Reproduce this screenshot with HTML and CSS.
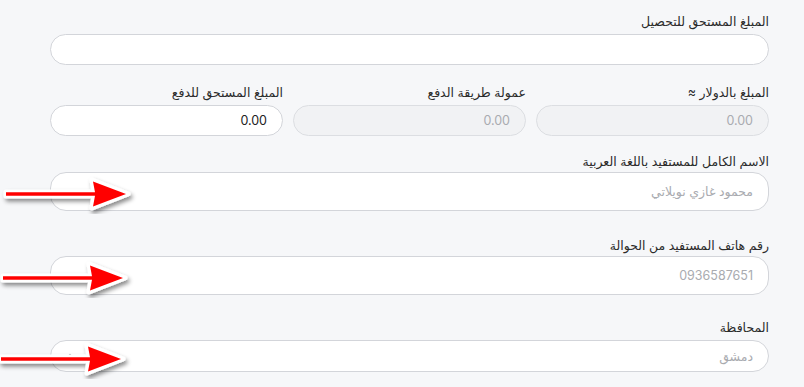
FILE: index.html
```html
<!DOCTYPE html>
<html lang="ar">
<head>
    <meta charset="UTF-8">
    <title>Transfer form</title>
    <link rel="stylesheet" href="styles.css">
</head>
<body>
    <form class="form" dir="rtl">
        <div class="field first">
            <label>المبلغ المستحق للتحصيل</label>
            <input class="input" type="text">
        </div>

        <div class="row">
            <div class="field">
                <label>المبلغ بالدولار ≈</label>
                <input class="input" type="text" placeholder="0.00" disabled>
            </div>
            <div class="field">
                <label>عمولة طريقة الدفع</label>
                <input class="input" type="text" placeholder="0.00" disabled>
            </div>
            <div class="field">
                <label>المبلغ المستحق للدفع</label>
                <input class="input" type="text" value="0.00">
            </div>
        </div>

        <div class="field tall">
            <label>الاسم الكامل للمستفيد باللغة العربية</label>
            <input class="input" type="text" placeholder="محمود غازي نويلاتي">
        </div>

        <div class="field tall">
            <label>رقم هاتف المستفيد من الحوالة</label>
            <input class="input" type="text" placeholder="0936587651">
        </div>

        <div class="field">
            <label>المحافظة</label>
            <div class="select">
                <span class="select-text">دمشق</span>
                <svg class="chevron" width="8" height="6" viewBox="0 0 8 6"><path d="M1 4.5 L4 1.5 L7 4.5" fill="none" stroke="#888" stroke-width="1.2"/></svg>
            </div>
        </div>
    </form>

    <!-- annotation arrows -->
    <svg class="arrow a1" width="140" height="40" viewBox="0 0 140 40"><use href="#arr"/></svg>
    <svg class="arrow a2" width="140" height="40" viewBox="0 0 140 40"><use href="#arr"/></svg>
    <svg class="arrow a3" width="140" height="40" viewBox="0 0 140 40"><use href="#arr"/></svg>

    <svg width="0" height="0" style="position:absolute">
        <defs>
            <filter id="sh" x="-20%" y="-40%" width="140%" height="180%">
                <feDropShadow dx="2" dy="3" stdDeviation="2" flood-color="#000" flood-opacity="0.45"/>
            </filter>
            <g id="arr" filter="url(#sh)">
                <path d="M6 18 L94 18 L92 6 L128 20 L92 34 L94 22 L6 22 Z" fill="#fff" stroke="#fff" stroke-width="5" stroke-linejoin="round"/>
                <path d="M6 18.3 L95 18.3 L93 7.5 L126 20 L93 32.5 L95 21.7 L6 21.7 Z" fill="#ff0000"/>
            </g>
        </defs>
    </svg>
</body>
</html>
```

FILE: styles.css
```css
/* General */
body {
    margin: 0;
    padding: 0;
    background: #f6f7f9;
    font-family: "Inter", "DejaVu Sans", sans-serif;
    position: relative;
    height: 387px;
    overflow: hidden;
}

.form {
    width: 719px;
    margin-left: 50px;
    padding-top: 13px;
}

/* Fields */
.field {
    display: flex;
    flex-direction: column;
    margin-bottom: 19px;
}

.field label {
    font-size: 12.5px;
    line-height: 18px;
    height: 18px;
    color: #2b2b2b;
    margin-bottom: 3px;
}

.input {
    height: 31px;
    box-sizing: border-box;
    border: 1px solid #d3d5da;
    border-radius: 16px;
    background: #fff;
    padding: 0 15px;
    font-family: "Inter", "DejaVu Sans", sans-serif;
    font-size: 12.5px;
    color: #222;
    text-align: right;
    outline: none;
}

.input::placeholder {
    color: #a9abb0;
}

.input:disabled {
    background: #f1f2f4;
    border-color: #dcdee2;
}

.row {
    display: grid;
    grid-template-columns: repeat(3, 1fr);
    gap: 10px;
}

.row .field {
    margin-bottom: 17px;
}

.field.tall {
    margin-bottom: 26px;
}

.field.tall label {
    margin-bottom: 1px;
}

.field.tall .input {
    height: 39px;
}

.field.tall + .field.tall {
    margin-bottom: 24px;
}

/* Select */
.select {
    height: 32px;
    box-sizing: border-box;
    border: 1px solid #d3d5da;
    border-radius: 16px;
    background: #fff;
    padding: 0 15px;
    display: flex;
    align-items: center;
    justify-content: space-between;
}

.select-text {
    font-size: 12.5px;
    color: #a9abb0;
}

/* Annotation arrows */
.arrow {
    position: absolute;
    left: 0;
}

.a1 { top: 174px; }
.a2 { top: 258px; left: -3px; }
.a3 { top: 339px; left: -5px; }
```
